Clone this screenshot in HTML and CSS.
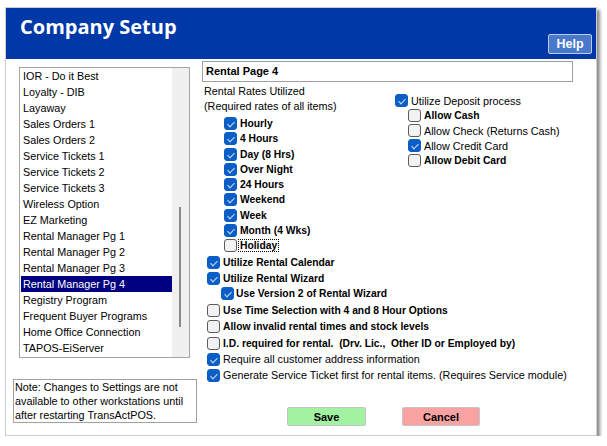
FILE: index.html
```html
<!DOCTYPE html>
<html>
<head>
<meta charset="utf-8">
<link rel="stylesheet" href="styles.css">
</head>
<body>
<div class="window">
  <div class="titlebar">
    <h1 class="title">Company Setup</h1>
    <button class="help">Help</button>
  </div>
  <div class="body">
    <div class="left">
      <div class="list">
        <ul class="items">
          <li>IOR - Do it Best</li>
          <li>Loyalty - DIB</li>
          <li>Layaway</li>
          <li>Sales Orders 1</li>
          <li>Sales Orders 2</li>
          <li>Service Tickets 1</li>
          <li>Service Tickets 2</li>
          <li>Service Tickets 3</li>
          <li>Wireless Option</li>
          <li>EZ Marketing</li>
          <li>Rental Manager Pg 1</li>
          <li>Rental Manager Pg 2</li>
          <li>Rental Manager Pg 3</li>
          <li class="selected">Rental Manager Pg 4</li>
          <li>Registry Program</li>
          <li>Frequent Buyer Programs</li>
          <li>Home Office Connection</li>
          <li>TAPOS-EiServer</li>
        </ul>
        <div class="scrollbar"><div class="thumb"></div></div>
      </div>
      <div class="note">Note: Changes to Settings are not available to other workstations until after restarting TransActPOS.</div>
    </div>
    <div class="right">
      <div class="pagebox">Rental Page 4</div>
      <div class="split">
        <div class="rates">
          <div class="rates-head">Rental Rates Utilized<br>(Required rates of all items)</div>
          <div class="rate-list">
            <div class="cb bold"><span class="box on"></span><span>Hourly</span></div>
            <div class="cb bold"><span class="box on"></span><span>4 Hours</span></div>
            <div class="cb bold"><span class="box on"></span><span>Day (8 Hrs)</span></div>
            <div class="cb bold"><span class="box on"></span><span>Over Night</span></div>
            <div class="cb bold"><span class="box on"></span><span>24 Hours</span></div>
            <div class="cb bold"><span class="box on"></span><span>Weekend</span></div>
            <div class="cb bold"><span class="box on"></span><span>Week</span></div>
            <div class="cb bold"><span class="box on"></span><span>Month (4 Wks)</span></div>
            <div class="cb bold"><span class="box"></span><span class="focus">Holiday</span></div>
          </div>
        </div>
        <div class="deposit">
          <div class="cb"><span class="box on"></span><span>Utilize Deposit process</span></div>
          <div class="dep-list">
            <div class="cb bold"><span class="box"></span><span>Allow Cash</span></div>
            <div class="cb"><span class="box"></span><span>Allow Check (Returns Cash)</span></div>
            <div class="cb"><span class="box on"></span><span>Allow Credit Card</span></div>
            <div class="cb bold"><span class="box"></span><span>Allow Debit Card</span></div>
          </div>
        </div>
      </div>
      <div class="options">
        <div class="opt bold"><span class="box on"></span><span>Utilize Rental Calendar</span></div>
        <div class="opt bold"><span class="box on"></span><span>Utilize Rental Wizard</span></div>
        <div class="opt sub bold"><span class="box on"></span><span>Use Version 2 of Rental Wizard</span></div>
        <div class="opt gap2 bold"><span class="box"></span><span>Use Time Selection with 4 and 8 Hour Options</span></div>
        <div class="opt bold"><span class="box"></span><span>Allow invalid rental times and stock levels</span></div>
        <div class="opt gap1 bold"><span class="box"></span><span>I.D. required for rental.&nbsp; (Drv. Lic.,&nbsp; Other ID or Employed by)</span></div>
        <div class="opt"><span class="box on"></span><span>Require all customer address information</span></div>
        <div class="opt"><span class="box on"></span><span>Generate Service Ticket first for rental items. (Requires Service module)</span></div>
      </div>
      <div class="buttons">
        <button class="btn save">Save</button>
        <button class="btn cancel">Cancel</button>
      </div>
    </div>
  </div>
</div>
</body>
</html>
```

FILE: styles.css
```css
* { box-sizing: border-box; }
body {
  margin: 0;
  background: #fff;
  font-family: "Liberation Sans", Arial, sans-serif;
  font-size: 10.8px;
  color: #000;
}
.window {
  margin: 7px 0 0 5px;
  width: 592px;
  height: 429px;
  border: 1px solid #cdcdcd;
  background: #fff;
  box-shadow: 3px 3px 3px rgba(0, 0, 0, 0.45);
  display: flex;
  flex-direction: column;
}
.titlebar {
  height: 51px;
  flex: none;
  background: #0038a8;
  display: flex;
  justify-content: space-between;
  align-items: flex-start;
}
.title {
  margin: 0;
  padding: 6px 0 0 14px;
  font: bold 20px/26px "Open Sans", sans-serif;
  color: #fff;
}
.help {
  margin: 26px 4px 0 0;
  width: 44px;
  height: 20px;
  padding: 0;
  background: #4a78cc;
  border: 1px solid #b9cbee;
  border-radius: 2px;
  color: #fff;
  font: bold 12.5px "Liberation Sans", Arial, sans-serif;
}
.body {
  display: flex;
  padding-left: 7px;
  flex: 1;
}
.left {
  width: 184px;
  flex: none;
  display: flex;
  flex-direction: column;
}
.list {
  margin: 8px 0 0 6px;
  width: 171px;
  height: 291px;
  border: 1px solid #a5a5a5;
  display: flex;
}
.items {
  list-style: none;
  margin: 0;
  padding: 0;
  flex: 1;
}
.items li {
  height: 16px;
  line-height: 16px;
  margin-left: 1px;
  padding-left: 2px;
  white-space: nowrap;
}
.items li.selected {
  background: #000080;
  color: #fff;
}
.scrollbar {
  width: 17px;
  flex: none;
  background: #f0f0f0;
  padding: 139px 0 0 7px;
}
.thumb {
  width: 2px;
  height: 120px;
  background: #8a8a8a;
}
.note {
  margin-top: 21px;
  width: 184px;
  height: 44px;
  border: 1px solid #a0a0a0;
  padding: 0 2px 0 1px;
  line-height: 14px;
}
.right {
  margin-left: 5px;
  flex: 1;
  display: flex;
  flex-direction: column;
}
.pagebox {
  margin-top: 2px;
  width: 371px;
  height: 21px;
  border: 1px solid #a0a0a0;
  padding-left: 3px;
  font-weight: bold;
  font-size: 11px;
  line-height: 19px;
}
.split { display: flex; }
.rates {
  width: 193px;
  flex: none;
  padding-top: 2px;
}
.rates-head {
  padding-left: 2px;
  line-height: 15px;
}
.rate-list {
  margin-top: 2px;
  padding-left: 22px;
}
.cb {
  display: flex;
  align-items: center;
  height: 15.25px;
  white-space: nowrap;
}
.deposit { margin-top: 11px; }
.deposit .cb { height: 15px; }
.dep-list { padding-left: 13px; }
.bold {
  font-weight: bold;
  font-size: 10.3px;
}
.box {
  width: 13px;
  height: 13px;
  flex: none;
  margin-right: 3px;
  border-radius: 3px;
  background: #f2f2f2;
  border: 1px solid #5c5c5c;
  position: relative;
}
.box.on {
  background: #0b5ec6;
  border-color: #0b5ec6;
}
.box.on::after {
  content: "";
  position: absolute;
  left: 4px;
  top: 2px;
  width: 3px;
  height: 6px;
  border-right: 1px solid #c9dbf3;
  border-bottom: 1px solid #c9dbf3;
  transform: rotate(45deg);
}
.focus {
  outline: 1px dotted #000;
  outline-offset: 0;
  padding: 0 1px;
  margin-left: -1px;
}
.options {
  margin-top: 1px;
  padding-left: 5px;
}
.opt {
  display: flex;
  align-items: center;
  height: 16px;
  white-space: nowrap;
}
.opt.sub {
  height: 14px;
  padding-left: 14px;
}
.opt.sub .box { margin-right: 2px; }
.opt.gap2 { margin-top: 2px; }
.opt.gap1 { margin-top: 1px; }
.buttons {
  margin-top: 24px;
  padding-left: 85px;
  display: flex;
  gap: 36px;
}
.btn {
  height: 19px;
  padding: 0;
  border: 1px solid #c4c4c4;
  border-radius: 2px;
  font: bold 11px "Liberation Sans", Arial, sans-serif;
  color: #000;
}
.save { width: 79px; background: #a2f2a2; }
.cancel { width: 78px; background: #f8a2a2; }
```
